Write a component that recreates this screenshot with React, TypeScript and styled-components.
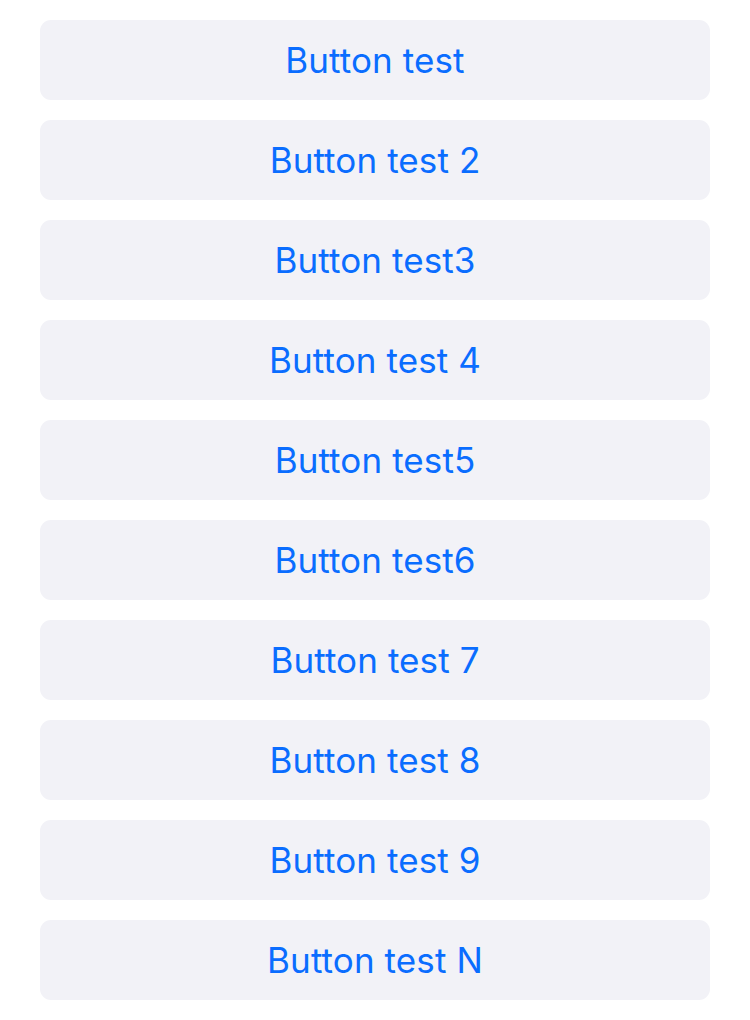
import React from 'react';
import styled, { createGlobalStyle } from 'styled-components';

const labels = [
  'Button test',
  'Button test 2',
  'Button test3',
  'Button test 4',
  'Button test5',
  'Button test6',
  'Button test 7',
  'Button test 8',
  'Button test 9',
  'Button test N',
];

const App: React.FC = () => {
  return (
    <>
      <GlobalStyle />
      <ButtonList>
        {labels.map((label) => (
          <TestButton key={label} type='button'>
            {label}
          </TestButton>
        ))}
      </ButtonList>
    </>
  );
};

const GlobalStyle = createGlobalStyle`
  body {
    margin: 0;
    background: #ffffff;
    font-family: Inter, "Noto Sans", sans-serif;
  }
`;

const ButtonList = styled.div`
  display: flex;
  flex-direction: column;
  gap: 20px;
  padding: 20px 40px;
`;

const TestButton = styled.button`
  height: 80px;
  border: none;
  border-radius: 11px;
  background: #f2f2f7;
  color: #0a6dff;
  font-family: Inter, "Noto Sans", sans-serif;
  font-size: 35px;
  letter-spacing: 0.1px;
  cursor: pointer;
`;

export default App;
